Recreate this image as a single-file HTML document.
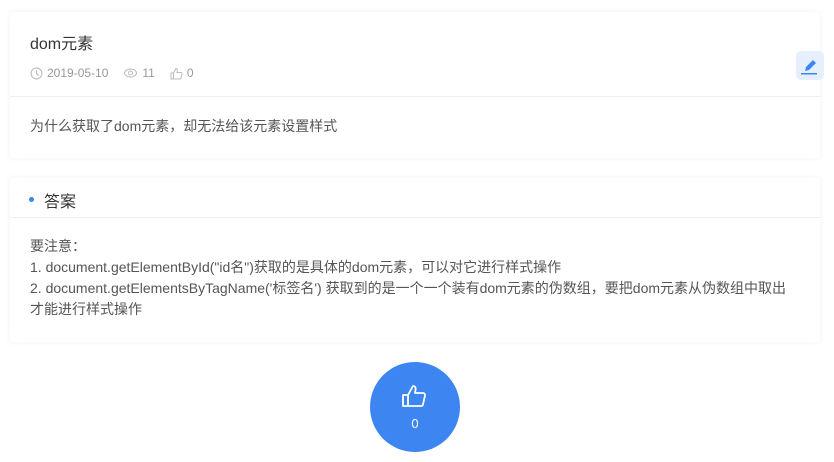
<!DOCTYPE html>
<html><head><meta charset="utf-8"><style>
body{margin:0;background:#fff;font-family:"Liberation Sans","Noto Sans CJK SC",sans-serif;width:834px;height:462px;overflow:hidden;position:relative}
.card{position:absolute;left:10px;width:810px;background:#fff;box-shadow:0 0 6px rgba(0,0,0,0.06);border-radius:3px}
.t{position:absolute;left:20px;top:18px;font-size:16px;color:#333}
.meta{position:absolute;left:20px;top:54px;font-size:12px;color:#999;display:flex;align-items:center}
.meta span{margin-right:15px;display:flex;align-items:center}
.meta svg{margin-right:4px}
.hr{position:absolute;left:0;right:0;height:1px;background:#eee}
.txt{font-size:14px;color:#555;line-height:21px}
</style></head><body>
<div class="card" style="top:12px;height:146px">
 <div class="t">dom元素</div>
 <div class="meta">
  <span><svg width="13" height="13" viewBox="0 0 12 12"><circle cx="6" cy="6" r="5" fill="none" stroke="#bbb"/><path d="M6 3v3l2 2" fill="none" stroke="#bbb"/></svg>2019-05-10</span>
  <span><svg width="15" height="12" viewBox="0 0 14 12"><ellipse cx="7" cy="6" rx="6" ry="4" fill="none" stroke="#bbb"/><circle cx="7" cy="6" r="2" fill="none" stroke="#bbb"/></svg>11</span>
  <span><svg width="13" height="13" viewBox="0 0 13 13"><path d="M1 6h2.5v6H1zM3.5 6L6 1.5c1 0 1.5.7 1.3 1.8L7 5.5h4c.7 0 1.1.6 1 1.2l-1 4.5c-.1.5-.5.8-1 .8H3.5" fill="none" stroke="#bbb"/></svg>0</span>
 </div>
 <div class="hr" style="top:84px"></div>
 <div class="txt" style="position:absolute;left:20px;top:104px">为什么获取了dom元素，却无法给该元素设置样式</div>
</div>
<div style="position:absolute;left:796px;top:51px;width:28px;height:29px;background:#e6f0fd;border-radius:5px">
 <svg width="28" height="29" viewBox="0 0 28 29"><path d="M9 20l1-4 7-7 3 3-7 7z" fill="#3d85f0"/><rect x="5" y="22" width="16" height="1.5" fill="#3d85f0"/></svg>
</div>
<div class="card" style="top:178px;height:164px">
 <div style="position:absolute;left:19px;top:19px;width:5px;height:5px;border-radius:50%;background:#3d85f0"></div>
 <div style="position:absolute;left:34px;top:10px;font-size:16px;color:#333">答案</div>
 <div class="hr" style="top:39px"></div>
 <div class="txt" style="position:absolute;left:20px;top:58px;width:770px">要注意：<br>1. document.getElementById("id名")获取的是具体的dom元素，可以对它进行样式操作<br>2. document.getElementsByTagName('标签名') 获取到的是一个一个装有dom元素的伪数组，要把dom元素从伪数组中取出<br>才能进行样式操作</div>
</div>
<div style="position:absolute;left:370px;top:362px;width:90px;height:90px;border-radius:50%;background:#3d85f0;color:#fff;text-align:center">
 <svg style="position:absolute;left:31px;top:20px" width="28" height="28" viewBox="0 0 28 28"><path d="M2 13h5v11H2zM7 13l5-9c2 0 3 1.5 2.6 3.5L14 11h8c1.4 0 2.2 1.2 2 2.4l-2 9c-.2 1-1 1.6-2 1.6H7" fill="none" stroke="#fff" stroke-width="1.8" stroke-linejoin="round"/></svg>
 <div style="position:absolute;left:0;right:0;top:54px;font-size:13px">0</div>
</div>
</body></html>
